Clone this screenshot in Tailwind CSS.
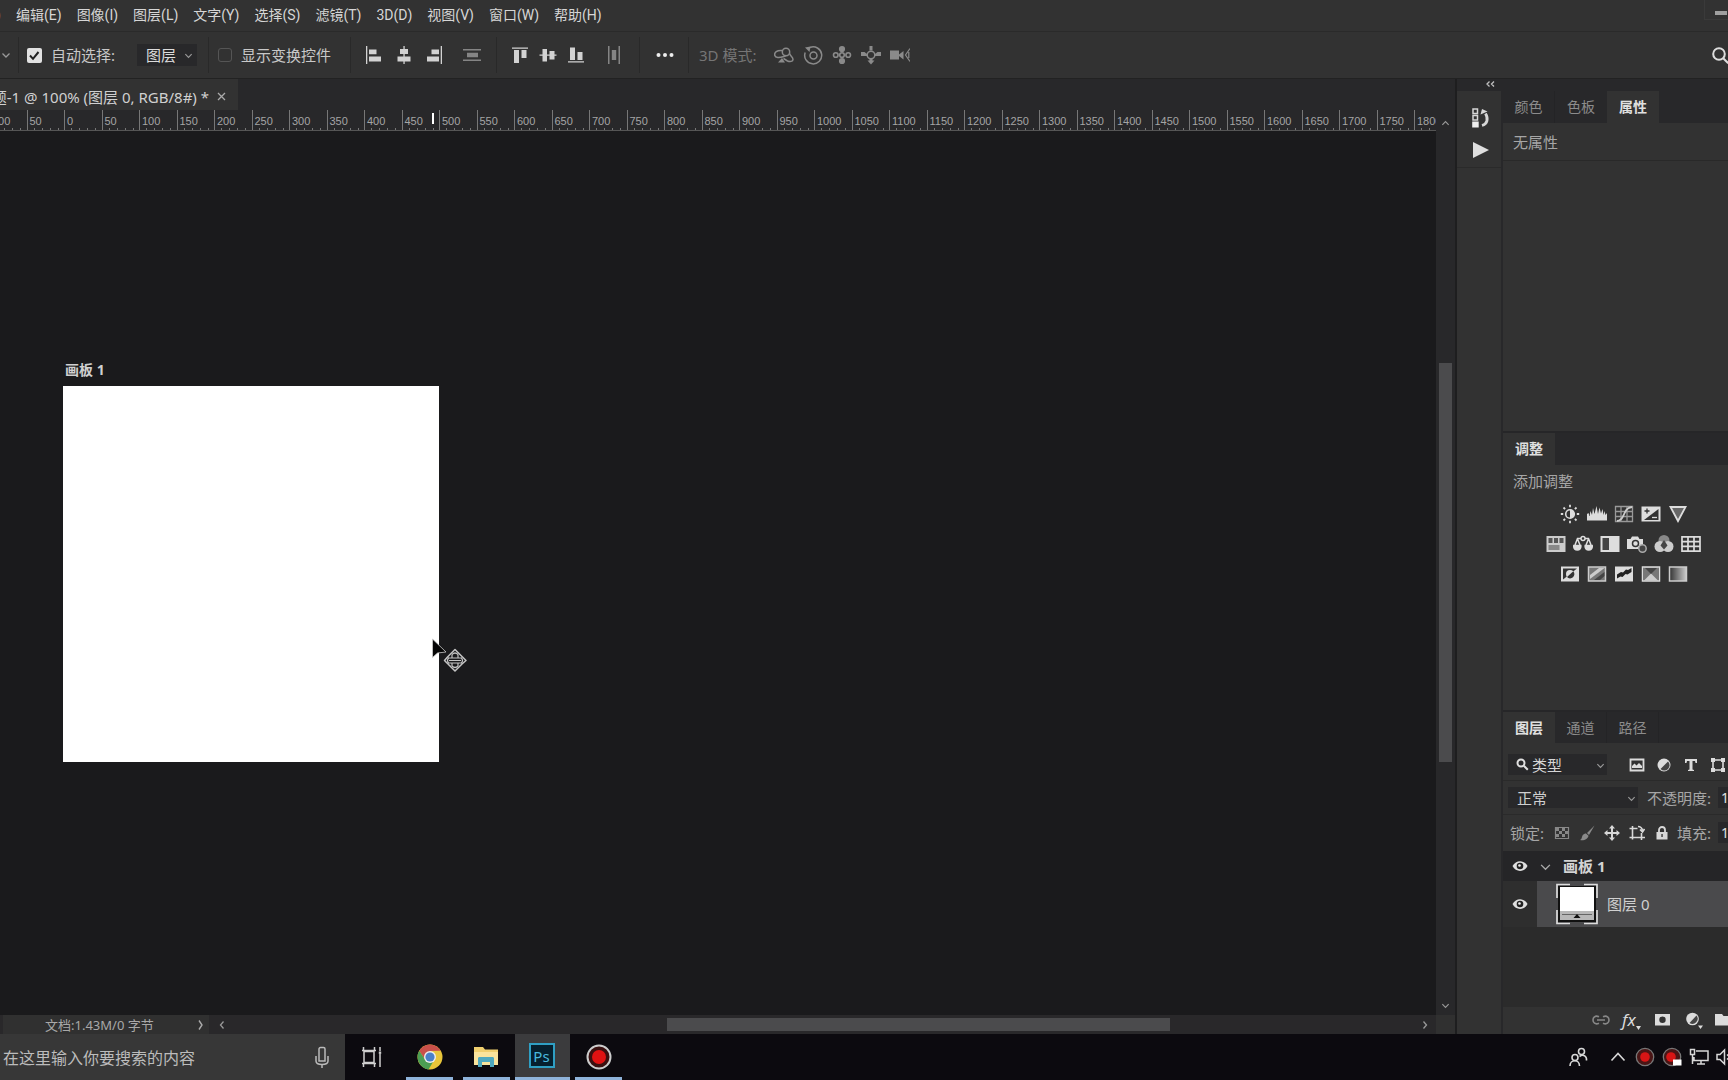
<!DOCTYPE html>
<html lang="zh-CN">
<head>
<meta charset="utf-8">
<title>Photoshop</title>
<script src="https://cdn.jsdelivr.net/npm/@tailwindcss/browser@4"></script>
</head>
<body class="flex h-screen min-w-[1200px] flex-col overflow-hidden bg-[#323232] font-['Noto_Sans','Noto_Sans_CJK_SC',sans-serif] text-[15px] leading-5 text-[#c8c8c8]">

<!-- Menu bar -->
<header class="flex h-8 shrink-0 items-start justify-between border-b border-[#2a2a2a] font-[Roboto,'Noto_Sans_CJK_SC',sans-serif] text-sm">
  <nav class="flex gap-[15px] pt-[5px] text-[#d6d6d6]">
    <button class="-ml-[46px] w-[47px] text-right">文件(F)</button>
    <button>编辑(E)</button>
    <button>图像(I)</button>
    <button>图层(L)</button>
    <button>文字(Y)</button>
    <button>选择(S)</button>
    <button>滤镜(T)</button>
    <button>3D(D)</button>
    <button>视图(V)</button>
    <button>窗口(W)</button>
    <button>帮助(H)</button>
  </nav>
  <button aria-label="最小化" class="flex h-5 w-6 items-end justify-center border-b border-l border-[#3a3a3a] pb-1"><span class="ml-2 block h-1 w-3 bg-[#a0a0a0]"></span></button>
</header>

<!-- Tool options -->
<section class="flex h-[47px] shrink-0 items-center border-b border-[#222]">
  <div class="flex h-9 w-[19px] items-center border-r border-[#292929]">
    <svg class="ml-px" width="10" height="10" viewBox="0 0 10 10" fill="none" stroke="#999" stroke-width="1.3"><path d="M1.5 3.5 5 7l3.500-3.500"/></svg>
  </div>
  <label class="flex w-[118px] items-center gap-[9px] pl-2">
    <span class="relative block h-[15px] w-[15px]">
      <input type="checkbox" checked class="block h-[15px] w-[15px] appearance-none rounded-[2px] bg-[#e2e2e2]">
      <svg class="absolute left-0 top-0" width="15" height="15" viewBox="0 0 15 15" fill="none" stroke="#222" stroke-width="2"><path d="m3 7.500 3 3.300 5.500-6.800"/></svg>
    </span>
    自动选择:
  </label>
  <div class="relative">
    <select aria-label="自动选择" class="block h-[22px] w-[60px] appearance-none bg-[#28282a] pl-[9px] text-[15px] leading-5 text-[#dcdcdc]"><option>图层</option></select>
    <svg class="pointer-events-none absolute right-1 top-[7px]" width="9" height="9" viewBox="0 0 10 10" fill="none" stroke="#999" stroke-width="1.3"><path d="M1.500 3.500 5 7l3.500-3.500"/></svg>
  </div>
  <div class="ml-[11px] h-9 w-px bg-[#292929]"></div>
  <label class="ml-[9px] flex items-center gap-[9px]">
    <input type="checkbox" class="h-[14px] w-[14px] appearance-none rounded-[3px] border border-[#555]">
    显示变换控件
  </label>
  <div class="ml-[19px] h-9 w-px bg-[#292929]"></div>
  <div class="ml-[13px] flex gap-[10px] text-[#d2d2d2]">
    <button aria-label="左对齐"><svg width="20" height="20" viewBox="0 0 20 20" fill="currentColor"><path d="M2 1h1.300v18H2zM5 4.500h7.500v4.800H5zM5 11.500h12v5H5z"/></svg></button>
    <button aria-label="水平居中对齐"><svg width="20" height="20" viewBox="0 0 20 20" fill="currentColor"><path d="M9.400 1h1.300v18H9.400zM6 4h8v5H6zM3.500 11.500h13v5h-13z"/></svg></button>
    <button aria-label="右对齐"><svg width="20" height="20" viewBox="0 0 20 20" fill="currentColor"><path d="M16.700 1H18v18h-1.300zM7.500 4.500H15v4.800H7.500zM3 11.500h12v5H3z"/></svg></button>
  </div>
  <button aria-label="垂直分布" class="ml-[18px] text-[#858585]"><svg width="20" height="20" viewBox="0 0 20 20" fill="currentColor"><path d="M1 4h18v1.500H1zM1 14.500h18V16H1zM5 7.800h11v4.400H5z"/></svg></button>
  <div class="ml-[14px] h-9 w-px bg-[#292929]"></div>
  <div class="ml-[13px] flex gap-2 text-[#d2d2d2]">
    <button aria-label="顶对齐"><svg width="20" height="20" viewBox="0 0 20 20" fill="currentColor"><path d="M2 2.500h16v1.300H2zM4 5h5v13H4zM11.500 5h5v8h-5z"/></svg></button>
    <button aria-label="垂直居中对齐"><svg width="20" height="20" viewBox="0 0 20 20" fill="currentColor"><path d="M1.500 9.400h17v1.300h-17zM4.500 4H9v12.500H4.500zM11.500 6h5v8.500h-5z"/></svg></button>
    <button aria-label="底对齐"><svg width="20" height="20" viewBox="0 0 20 20" fill="currentColor"><path d="M2 16.200h16v1.300H2zM4 2.500h5V15H4zM11.500 7h5v8h-5z"/></svg></button>
  </div>
  <button aria-label="水平分布" class="ml-[18px] text-[#858585]"><svg width="20" height="20" viewBox="0 0 20 20" fill="currentColor"><path d="M4 1h1.500v18H4zM14.500 1H16v18h-1.500zM7.800 5h4.400v10H7.800z"/></svg></button>
  <div class="ml-[15px] h-9 w-px bg-[#292929]"></div>
  <button aria-label="更多" class="ml-[15px]"><svg width="20" height="20" viewBox="0 0 20 20" fill="#eee"><circle cx="3.500" cy="10" r="2"/><circle cx="10" cy="10" r="2"/><circle cx="16.500" cy="10" r="2"/></svg></button>
  <div class="ml-[13px] h-9 w-px bg-[#292929]"></div>
  <span class="ml-[10px] w-[75px] text-[#757575]">3D 模式:</span>
  <div class="flex gap-[9px] text-[#8a8a8a]">
    <button aria-label="环绕"><svg width="20" height="20" viewBox="0 0 20 20" fill="none" stroke="currentColor" stroke-width="1.500"><circle cx="12" cy="7" r="3.700"/><path d="M8 5.500C3 5 0 7.500.8 10.500 1.500 13 5 13 10 11.500l2-1M15.500 8.500c1 3 3.500 3.500 3.500 6 0 2-3 2.500-5.500 1.500l-4-2.500"/><path d="M4 17.500h7l-3-4.500z" fill="currentColor" stroke="none"/></svg></button>
    <button aria-label="滚动"><svg width="20" height="20" viewBox="0 0 20 20" fill="none" stroke="currentColor" stroke-width="1.500"><circle cx="10.500" cy="10.500" r="3.500"/><path d="M7 2.500a8.500 8.500 0 1 1-4.800 5"/><path d="M2 2.500l5.500-1L6.500 7z" fill="currentColor" stroke="none"/></svg></button>
    <button aria-label="平移"><svg width="20" height="20" viewBox="0 0 20 20" fill="none" stroke="currentColor" stroke-width="1.600"><circle cx="10" cy="10" r="2.300"/><circle cx="10" cy="4" r="2.300" fill="currentColor"/><circle cx="10" cy="16" r="2.300" fill="currentColor"/><circle cx="3.800" cy="10" r="2.300"/><circle cx="16.200" cy="10" r="2.300"/></svg></button>
    <button aria-label="滑动"><svg width="20" height="20" viewBox="0 0 20 20" fill="currentColor"><circle cx="10" cy="10" r="3.800" fill="none" stroke="currentColor" stroke-width="1.500"/><path d="M8.500 1h3v4.500h-3zM0 7h3.500L6 9v2H3.500L0 11zM20 7h-3.500L14 9v2h2.500l3.500 0zM8.500 14h3v1.500h2L10 19.500 6.500 15.500h2z"/></svg></button>
    <button aria-label="缩放相机"><svg width="20" height="20" viewBox="0 0 20 20" fill="currentColor"><path d="M0 5.500h9v9H0zM9 9.500 13.500 6v8.500L9 11z"/><path d="M20 3.500 15.500 10l4.500 6.500M18.800 7v6" fill="none" stroke="currentColor" stroke-width="1.200"/></svg></button>
  </div>
  <button aria-label="搜索" class="-mr-px ml-auto"><svg width="18" height="18" viewBox="0 0 18 18" fill="none" stroke="#ddd" stroke-width="2"><circle cx="8" cy="8" r="5.800"/><path d="m12.200 12.200 5 5"/></svg></button>
</section>

<main class="flex min-h-0 flex-1">
  <!-- Document window -->
  <section class="flex min-w-0 flex-1 flex-col border-r-2 border-[#1e1e1f] bg-[#28282a]">
    <div class="flex h-[31px] shrink-0">
      <div class="flex w-[238px] items-center justify-end gap-2 overflow-hidden bg-[#323232] pr-3 pt-1">
        <span class="whitespace-nowrap text-[15px] text-[#d0d0d0]">未标题-1 @ 100% (图层 0, RGB/8#) *</span>
        <button aria-label="关闭"><svg width="9" height="9" viewBox="0 0 9 9" stroke="#aaa" stroke-width="1.300"><path d="m1 1 7 7M8 1 1 8"/></svg></button>
      </div>
    </div>
    <div class="flex min-h-0 flex-1">
      <div class="flex min-w-0 flex-1 flex-col">
        <div class="relative h-[21px] shrink-0 overflow-hidden border-b border-[#555]">
          <div id="ruler" class="-ml-[11px] flex h-full font-['Liberation_Sans',sans-serif] text-[11px] leading-4 text-[#a5a5a5]"></div>
          <span class="absolute left-[432px] top-[3px] h-[11px] w-0.5 bg-white"></span>
        </div>
        <!-- Canvas -->
        <div class="relative flex-1 overflow-hidden bg-[#1a1a1c]">
          <span class="absolute left-[65px] top-[229px] text-[14px] font-bold text-[#d0d0d0]">画板 1</span>
          <div class="absolute left-[63px] top-[255px] h-[376px] w-[376px] bg-white"></div>
          <svg class="absolute left-[430px] top-[505px]" width="40" height="40" viewBox="0 0 40 40"><path d="M2.500 3v18.500l5-4.500 8.500-1z" fill="#050505" stroke="#ccc" stroke-width=".8"/><path d="M25 13.500 28.500 17 32 20.500 36 24.500 32 28 28.500 31.500 25 35 21.500 31.500 18 28 14.500 24.500 18 20.500z" fill="#1a1a1c" stroke="#c4c4c4" stroke-width="1.500" stroke-linejoin="round"/><path d="M22 18.500c2-2 4-2 6 0M22 30c2 2 4 2 6 0M19 21.500c-2 2-2 4 0 6M31 21.500c2 2 2 4 0 6M19 22h12M19 24.500h12M19 27h12M22 18.500v3M28 18.500v3M22 27v3M28 27v3" fill="none" stroke="#c4c4c4" stroke-width="1.200"/></svg>
        </div>
      </div>
      <!-- Vertical scroll bar -->
      <div class="flex w-[19px] flex-col items-center bg-[#28282a] pb-[5px] pt-[9px]">
        <svg width="9" height="9" viewBox="0 0 10 10" fill="none" stroke="#999" stroke-width="1.300"><path d="M1.500 6.500 5 3l3.500 3.500"/></svg>
        <div class="mt-[235px] h-[399px] w-[13px] bg-[#4b4b4d]"></div>
        <svg class="mt-auto" width="9" height="9" viewBox="0 0 10 10" fill="none" stroke="#999" stroke-width="1.300"><path d="M1.500 3.500 5 7l3.500-3.500"/></svg>
      </div>
    </div>
    <!-- Status bar -->
    <div class="flex h-[19px] shrink-0 items-center bg-[#29282a] pl-[3px]">
      <div class="flex h-full w-[206px] items-center justify-between bg-[#303030] pl-[42px] pr-1 text-[13px] text-[#a8a8a8]">
        <span>文档:1.43M/0 字节</span>
        <svg width="8" height="12" viewBox="0 0 8 12" fill="none" stroke="#aaa" stroke-width="1.400"><path d="M2 1.500 5 6l-3 4.500"/></svg>
      </div>
      <svg class="ml-2" width="10" height="10" viewBox="0 0 10 10" fill="none" stroke="#999" stroke-width="1.300"><path d="M6.500 1.500 3.500 5l3 3.500"/></svg>
      <div class="ml-[440px] h-[13px] w-[503px] bg-[#4b4b4d]"></div>
      <svg class="ml-auto mr-[6px]" width="10" height="10" viewBox="0 0 10 10" fill="none" stroke="#999" stroke-width="1.300"><path d="M3.500 1.500 6.500 5l-3 3.500"/></svg>
      <div class="h-full w-[19px] bg-[#303030]"></div>
    </div>
  </section>

  <!-- Right dock -->
  <aside class="flex w-[271px] shrink-0 flex-col bg-[#323232]">
    <div class="h-3 shrink-0 bg-[#28282a] pl-7"><svg width="11" height="10" viewBox="0 0 11 10" fill="none" stroke="#c0c0c0" stroke-width="1.300"><path d="M4.500 2.500 2 5l2.500 2.500M9 2.500 6.500 5 9 7.500"/></svg></div>
    <div class="flex min-h-0 flex-1">
      <div class="flex w-[46px] shrink-0 flex-col items-center border-r-2 border-[#28282a]">
        <div class="flex w-full flex-col items-center gap-3 border-b border-[#2a2a2a] pb-2 pl-1 pt-4">
          <button aria-label="历史记录"><svg width="20" height="22" viewBox="0 0 20 22" fill="none" stroke="#d6d6d6" stroke-width="1.500"><path d="M2 2h4.500v4.500H2zM2 8.500h4.500V13H2z"/><path d="M1.200 14.500h6.500v6H1.200z" fill="#eee" stroke="none"/><path d="M11 18.500c5.500-1.500 6.500-7 3.500-12" stroke-width="2.800"/><path d="M9.500 7.500 11 2l5.500 2.500z" fill="#d6d6d6" stroke="none"/></svg></button>
          <button aria-label="动作"><svg width="18" height="18" viewBox="0 0 18 18" fill="#dedede"><path d="M1 1v16l16-8z"/></svg></button>
        </div>
      </div>
      <div class="flex min-w-0 flex-1 flex-col overflow-hidden">
        <!-- Properties -->
        <section class="flex h-[340px] shrink-0 flex-col">
          <div class="flex h-8 shrink-0 bg-[#28282a] text-[14px] text-[#8c8c8c]">
            <button class="w-[52px] border-r border-[#242426]">颜色</button>
            <button class="w-[52px]">色板</button>
            <button class="w-[52px] bg-[#323232] font-bold text-[#e0e0e0]">属性</button>
          </div>
          <p class="h-[38px] border-b border-[#292929] pl-[10px] pt-[9px] text-[#a6a6a6]">无属性</p>
        </section>
        <!-- Adjustments -->
        <section class="flex h-[279px] shrink-0 flex-col border-t-2 border-[#262628]">
          <div class="flex h-8 shrink-0 bg-[#28282a] text-[14px]">
            <button class="w-[52px] bg-[#323232] font-bold text-[#e0e0e0]">调整</button>
          </div>
          <p class="pl-[10px] pt-[6px] text-[#a6a6a6]">添加调整</p>
          <div class="mt-[13px] flex w-[241px] flex-col gap-[10px]">
            <div class="flex justify-center gap-[7px]">
              <button aria-label="亮度/对比度"><svg width="20" height="20" viewBox="0 0 20 20" fill="#ddd" stroke="#ddd"><circle cx="10" cy="10" r="4.300" fill="none" stroke-width="1.600"/><path d="M10 5.700a4.300 4.300 0 0 1 0 8.600z" stroke="none"/><path d="M10 .8v2.400M10 16.800v2.400M.8 10h2.400M16.800 10h2.400M3.500 3.500l1.600 1.600M14.900 14.900l1.600 1.600M3.500 16.500l1.600-1.600M14.900 5.100l1.600-1.600" stroke-width="1.800"/></svg></button>
              <button aria-label="色阶"><svg width="20" height="20" viewBox="0 0 20 20" fill="#ddd"><path d="M0 16.500V10l1.500-1 1 3L3.500 7l1.500 4 1-7 1.500 6 2-8 1.500 8 1.500-6.500 1.500 6L15.500 5l1 6 1-4 1 4 1.500-2v7.500z"/></svg></button>
              <button aria-label="曲线"><svg width="20" height="20" viewBox="0 0 20 20" fill="none" stroke="#999" stroke-width="1.300"><path d="M1.500 2.500h17v15h-17zM7 2.500v15M13 2.500v15M1.500 7.500h17M1.500 12.500h17"/><path d="M3 17c9-1 5-13 15-14" stroke="#ccc" stroke-width="1.800"/></svg></button>
              <button aria-label="曝光度"><svg width="20" height="20" viewBox="0 0 20 20"><path d="M.5 2.500h19v15H.5z" fill="#ddd"/><path d="M17.500 5v11H3z" fill="#333"/><path d="M3.500 7h5M6 4.500v5" stroke="#333" stroke-width="1.300"/><path d="M11 13.500h5" stroke="#ddd" stroke-width="1.300"/></svg></button>
              <button aria-label="自然饱和度"><svg width="20" height="20" viewBox="0 0 20 20"><path d="M2.500 3h15L10 17z" fill="#666" stroke="#ddd" stroke-width="1.800"/></svg></button>
            </div>
            <div class="flex justify-center gap-[7px]">
              <button aria-label="色相/饱和度"><svg width="20" height="20" viewBox="0 0 20 20"><path d="M.5 2h19v16H.5z" fill="#ccc"/><path d="M2.500 4h4v5h-4zM8 4h4v5H8zM13.500 4h4v5h-4z" fill="#555"/><path d="M2.500 11h11v5h-11z" fill="#888"/></svg></button>
              <button aria-label="色彩平衡"><svg width="20" height="20" viewBox="0 0 20 20" fill="none" stroke="#ddd" stroke-width="1.500"><circle cx="10" cy="4.500" r="2"/><path d="M8 4.500H4.500L2 11M12 4.500h3.500L18 11M4.500 5l2.500 6M15.500 5 13 11"/><path d="M.8 11.500h7c1 6-8 6-7 0zM12.200 11.500h7c1 6-8 6-7 0z" fill="#ddd"/></svg></button>
              <button aria-label="黑白"><svg width="20" height="20" viewBox="0 0 20 20"><path d="M.5 2h19v16H.5z" fill="#ddd"/><path d="M2.500 4H9v12H2.500z" fill="#444"/></svg></button>
              <button aria-label="照片滤镜"><svg width="20" height="20" viewBox="0 0 20 20"><path d="M0 5h3.500L5 2.500h6L12.500 5H16v10H0z" fill="#ddd"/><circle cx="8.500" cy="9.500" r="3" fill="none" stroke="#333" stroke-width="1.500"/><circle cx="15.500" cy="14.500" r="3.700" fill="#444" stroke="#aaa" stroke-width="1.500"/></svg></button>
              <button aria-label="通道混合器"><svg width="20" height="20" viewBox="0 0 20 20"><circle cx="10" cy="6.500" r="5.500" fill="#888"/><circle cx="6" cy="12.500" r="5.500" fill="#ccc"/><circle cx="14" cy="12.500" r="5.500" fill="#ccc"/><path d="m10 6 3.500 5.500-3.500 4-3.500-4z" fill="#444"/></svg></button>
              <button aria-label="颜色查找"><svg width="20" height="20" viewBox="0 0 20 20" fill="none" stroke="#ddd" stroke-width="1.700"><path d="M1 2.800h18v14.400H1zM7 2.800v14.400M13 2.800v14.400M1 7.600h18M1 12.400h18"/></svg></button>
            </div>
            <div class="flex justify-center gap-[7px]">
              <button aria-label="反相"><svg width="20" height="20" viewBox="0 0 20 20"><path d="M1 2.500h18v15H1z" fill="#ddd"/><path d="M3 4.500h14L3 15.500z" fill="#333"/><circle cx="10" cy="10" r="4" fill="#ddd"/><path d="M13.300 7.300 7 13a4.100 4.100 0 0 0 6.300-5.700z" fill="#333"/></svg></button>
              <button aria-label="色调分离"><svg width="20" height="20" viewBox="0 0 20 20"><path d="M1.500 3h17v14h-17z" fill="#777" stroke="#ccc" stroke-width="1.500"/><path d="M3 11 12 4h5.500L3 15z" fill="#ccc"/><path d="m7 16 10.500-8v4L13 16z" fill="#444"/></svg></button>
              <button aria-label="阈值"><svg width="20" height="20" viewBox="0 0 20 20"><path d="M1 2.500h18v15H1z" fill="#ddd"/><path d="m3 10.500 4-2.500 2 .5 3-3 2 .5 3.500-2V8l-4 2.500-2-.5-3 3-2-.5-3.500 2z" fill="#222"/></svg></button>
              <button aria-label="可选颜色"><svg width="20" height="20" viewBox="0 0 20 20"><path d="M1.500 3h17v14h-17z" fill="#777" stroke="#ddd" stroke-width="1.500"/><path d="m2 3.500 8 6.500-8 6.500zM18 3.500 10 10l8 6.500z" fill="#777"/><path d="m3 16.500 7-7 7 7z" fill="#ccc"/><path d="m4 4 6 6 6-6z" fill="#444"/></svg></button>
              <button aria-label="渐变映射"><svg width="20" height="20" viewBox="0 0 20 20"><defs><linearGradient id="gm"><stop offset="0" stop-color="#333"/><stop offset="1" stop-color="#ccc"/></linearGradient></defs><path d="M1.500 3h17v14h-17z" fill="url(#gm)" stroke="#ccc" stroke-width="1.500"/></svg></button>
            </div>
          </div>
        </section>
        <!-- Layers -->
        <section class="flex min-h-0 w-[260px] flex-1 flex-col border-t-2 border-[#262628]">
          <div class="flex h-[31px] shrink-0 bg-[#28282a] text-[14px] text-[#8c8c8c]">
            <button class="w-[52px] bg-[#323232] font-bold text-[#e0e0e0]">图层</button>
            <button class="w-[52px] border-r border-[#242426]">通道</button>
            <button class="w-[52px] border-r border-[#242426]">路径</button>
          </div>
          <div class="flex h-[38px] shrink-0 items-center border-b border-[#2a2a2a] pl-[5px] pt-[6px]">
            <div class="relative">
              <select aria-label="图层过滤" class="block h-[21px] w-[99px] appearance-none bg-[#28282a] pl-6 text-[15px] leading-5 text-[#d6d6d6]"><option>类型</option></select>
              <svg class="pointer-events-none absolute left-2 top-1" width="13" height="13" viewBox="0 0 13 13" fill="none" stroke="#e0e0e0" stroke-width="2"><circle cx="5" cy="5" r="3.500"/><path d="m7.800 7.800 4 4"/></svg>
              <svg class="pointer-events-none absolute right-[2px] top-[7px]" width="9" height="9" viewBox="0 0 10 10" fill="none" stroke="#999" stroke-width="1.300"><path d="M1.500 3.500 5 7l3.500-3.500"/></svg>
            </div>
            <div class="ml-[22px] flex gap-[11px] text-[#dcdcdc]">
              <button aria-label="像素图层"><svg width="16" height="16" viewBox="0 0 16 16"><path d="M1.500 2.500h13v11h-13z" fill="none" stroke="currentColor" stroke-width="1.800"/><path d="M3 11V9l2.500-2.500 2 2L10 6l3 3v2z" fill="currentColor"/></svg></button>
              <button aria-label="调整图层"><svg width="16" height="16" viewBox="0 0 16 16"><circle cx="8" cy="8" r="6.500" fill="currentColor"/><path d="M12 4.500 4.500 12A5.300 5.300 0 0 0 12 4.500z" fill="#444"/></svg></button>
              <button aria-label="文字图层"><svg width="16" height="16" viewBox="0 0 16 16" fill="currentColor"><path d="M2 2h12v4h-1.500L12 4H9.500v8.500L11 13v1H5v-1l1.500-.5V4H4l-.5 2H2z"/></svg></button>
              <button aria-label="形状图层"><svg width="16" height="16" viewBox="0 0 16 16" fill="none" stroke="currentColor"><path d="M3 3h10v10H3z" stroke-width="1.600"/><path d="M1 1h4v4H1zM11 1h4v4h-4zM1 11h4v4H1zM11 11h4v4h-4z" fill="currentColor" stroke="none"/></svg></button>
            </div>
          </div>
          <div class="flex h-[34px] shrink-0 items-center border-b border-[#2a2a2a] pl-[5px]">
            <div class="relative">
              <select aria-label="混合模式" class="block h-[21px] w-[130px] appearance-none bg-[#28282a] pl-[9px] text-[15px] leading-5 text-[#d0d0d0]"><option>正常</option></select>
              <svg class="pointer-events-none absolute right-[2px] top-[7px]" width="9" height="9" viewBox="0 0 10 10" fill="none" stroke="#999" stroke-width="1.300"><path d="M1.500 3.500 5 7l3.500-3.500"/></svg>
            </div>
            <label for="opacity" class="ml-[9px] w-[71px] text-[#a6a6a6]">不透明度:</label>
            <input id="opacity" value="100%" class="h-[21px] w-10 bg-[#28282a] pl-[3px] text-sm text-[#e0e0e0]">
          </div>
          <div class="flex h-9 shrink-0 items-center pb-px pl-[7px]">
            <span class="w-11 text-[#a6a6a6]">锁定:</span>
            <div class="flex gap-[9px] text-[#d8d8d8]">
              <button aria-label="锁定透明像素"><svg width="16" height="16" viewBox="0 0 16 16" fill="#888"><path d="M1.500 2.500h13v11h-13z" fill="none" stroke="#888" stroke-width="1.200"/><path d="M2 3h3v3H2zM8 3h3v3H8zM5 6h3v3H5zM11 6h3v3h-3zM2 9h3v3H2zM8 9h3v3H8z"/></svg></button>
              <button aria-label="锁定图像像素"><svg width="16" height="16" viewBox="0 0 16 16" fill="#8a8a8a"><path d="M15.500.5 10 10l-2-2zM7 8.500l2.500 2.300C9 14 5 16 1 15c2-1 1.500-2.500 2.500-4.500C4.500 9 6 8.500 7 8.500z"/></svg></button>
              <button aria-label="锁定位置"><svg width="16" height="16" viewBox="0 0 16 16" fill="currentColor"><path d="M8 0l3 3.500H9V7h3.500V5L16 8l-3.500 3V9H9v3.500h2L8 16l-3-3.500h2V9H3.500v2L0 8l3.500-3v2H7V3.500H5z"/></svg></button>
              <button aria-label="防止在画板内外自动嵌套"><svg width="16" height="16" viewBox="0 0 16 16" fill="none" stroke="currentColor" stroke-width="1.600"><path d="M3.500 1v13.500M.5 3.500h8M12.500 8v7M.5 12.500H16"/><path d="M9 1.500c2.500 0 4 1.500 4.500 4M15.500 4l-2 3-2.500-2.500"/></svg></button>
              <button aria-label="锁定全部"><svg width="16" height="16" viewBox="0 0 16 16"><path d="M5 7V5a3 3 0 0 1 6 0v2" fill="none" stroke="currentColor" stroke-width="1.800"/><path d="M2.500 7h11v7.500h-11z" fill="currentColor"/><path d="M7.300 9h1.500v3H7.300z" fill="#444"/></svg></button>
            </div>
            <label for="fill" class="ml-[7px] w-[41px] text-[#a6a6a6]">填充:</label>
            <input id="fill" value="100%" class="h-[21px] w-10 bg-[#28282a] pl-[3px] text-sm text-[#e0e0e0]">
          </div>
          <ul class="flex-1 bg-[#2b2b2b]">
            <li class="flex h-[30px] items-center bg-[#252527] pl-[9px]">
              <button aria-label="可见性"><svg width="16" height="12" viewBox="0 0 16 12"><path d="M.5 6C4-.5 12-.5 15.500 6 12 12.500 4 12.500.5 6z" fill="#e0e0e0"/><circle cx="8" cy="6" r="3.300" fill="#222"/><circle cx="7.500" cy="5.500" r="1.300" fill="#eee"/></svg></button>
              <svg class="ml-[12px]" width="11" height="11" viewBox="0 0 10 10" fill="none" stroke="#aaa" stroke-width="1.200"><path d="M1 3.500 5 7.500l4-4"/></svg>
              <span class="ml-3 font-bold text-[#d4d4d4]">画板 1</span>
            </li>
            <li class="flex h-[46px] items-center bg-[#4a4a4c]">
              <div class="flex h-full w-[34px] items-center bg-[#2e2e2e] pl-[9px]">
                <button aria-label="可见性"><svg width="16" height="12" viewBox="0 0 16 12"><path d="M.5 6C4-.5 12-.5 15.500 6 12 12.500 4 12.500.5 6z" fill="#e0e0e0"/><circle cx="8" cy="6" r="3.300" fill="#222"/><circle cx="7.500" cy="5.500" r="1.300" fill="#eee"/></svg></button>
              </div>
              <svg class="ml-[18px]" width="44" height="42" viewBox="0 0 44 42"><path d="M3 3h38v36H3z" fill="#111"/><path d="M5 4h34v24H5z" fill="#fff"/><path d="M5 28h34v9H5z" fill="#b8b8b8"/><path d="M7 31.500h30" stroke="#666"/><path d="m22 31 3.500 4h-7z" fill="#111"/><path d="M2 15V1.500h13M29 1.500h13V15M42 27v13.500H29M15 40.500H2V27" fill="none" stroke="#ddd" stroke-width="1.700"/></svg>
              <span class="ml-2 text-[#d0d0d0]">图层 0</span>
            </li>
          </ul>
          <div class="flex h-[27px] shrink-0 items-center gap-[11px] pb-0.5 pl-[88px] text-[#dcdcdc]">
            <button aria-label="链接图层"><svg width="20" height="20" viewBox="0 0 20 20" fill="none" stroke="#888" stroke-width="1.600"><path d="M8 6.800C4 5 2 7.500 2 10s2 5 6 3.200M12 6.800c4-1.800 6 .7 6 3.200s-2 5-6 3.200M6 10h8"/></svg></button>
            <button class="flex h-5 w-5 items-center text-[17px] italic">fx<svg class="shrink-0 self-end" width="5" height="4" viewBox="0 0 5 4" fill="currentColor"><path d="M0 0h5L2.500 4z"/></svg></button>
            <button aria-label="蒙版"><svg width="20" height="20" viewBox="0 0 20 20"><path d="M2 4h15v11.500H2z" fill="currentColor"/><circle cx="9.500" cy="9.700" r="3.200" fill="#333"/></svg></button>
            <button aria-label="新建调整图层"><svg width="20" height="20" viewBox="0 0 20 20"><circle cx="8.500" cy="9" r="6.300" fill="currentColor"/><path d="m12.500 5.500-7 7.500a5.200 5.200 0 0 0 7-7.500z" fill="#444"/><path d="M14 15.500h5L16.500 19z" fill="currentColor"/></svg></button>
            <button aria-label="新建组"><svg width="20" height="20" viewBox="0 0 20 20" fill="currentColor"><path d="M0 4h7l1.500 2H19v9.500H0z"/></svg></button>
          </div>
        </section>
      </div>
    </div>
  </aside>
</main>

<!-- Windows task bar -->
<footer class="flex h-[46px] shrink-0 bg-[#0c0a0f]">
  <label class="flex w-[345px] items-center justify-between bg-[#373737] pl-[3px] pr-4">
    <input aria-label="搜索" placeholder="在这里输入你要搜索的内容" class="mt-0.5 w-60 bg-transparent text-base placeholder:text-[#bcbcbc] placeholder:opacity-100">
    <svg width="14" height="24" viewBox="0 0 14 24" fill="none" stroke="#bbb" stroke-width="1.500"><path d="M4 4a1.500 1.500 0 0 1 1.500-1.500h3A1.500 1.500 0 0 1 10 4v12H4z"/><path d="M1 11v5c0 2 2 3.500 6 3.500s6-1.500 6-3.500v-5M7 19.500V23"/></svg>
  </label>
  <nav class="flex">
    <button aria-label="任务视图" class="flex w-[58px] items-center justify-center pr-1"><svg width="22" height="22" viewBox="0 0 22 22" fill="none" stroke="#d0d0d0" stroke-width="1.500"><path d="M3 5.500h10v11H3zM2.500 1v3M13.500 1v3M2.500 18v3M13.500 18v3M1 4.500h14M1 17.500h14M19 1v4M19 8v13"/><path d="M17.800 5.500h2.400v2.400h-2.400z" fill="#d0d0d0" stroke="none"/></svg></button>
    <button aria-label="Chrome" class="ml-[3px] mr-[10px] flex w-[47px] items-center justify-center border-b-[3px] border-[#8fb3da] pt-[3px]"><svg width="26" height="26" viewBox="0 0 26 26"><circle cx="13" cy="13" r="12.500" fill="#e8c53a"/><path d="M2.200 6.800A12.500 12.500 0 0 1 23.800 6.800L13 7 8 15.500z" fill="#c9504a"/><path d="M2.200 6.800A12.500 12.500 0 0 0 11.500 25.400l6-10L8 15.500z" fill="#4c9e53"/><circle cx="13" cy="13" r="6" fill="#eee"/><circle cx="13" cy="13" r="4.600" fill="#4a80c8"/></svg></button>
    <button aria-label="资源管理器" class="mr-[5px] flex w-[47px] items-center justify-center border-b-[3px] border-[#8fb3da] pr-0.5 pt-[3px]"><svg width="26" height="24" viewBox="0 0 26 24"><path d="M1 2h9l2 2.500h13V20H1z" fill="#f0cf6e"/><path d="M1 7h24v13H1z" fill="#f9e39c"/><path d="M5 22v-8.500c0-1 .7-1.500 1.500-1.500h13c1 0 1.500.7 1.500 1.500V22h-4v-5H9v5z" fill="#4fa9bf"/></svg></button>
    <button class="mr-[5px] flex w-[55px] items-center justify-center border-b-[3px] border-[#8fb3da] bg-[#3b3b3d] pr-0.5"><span class="flex h-[25px] w-[26px] items-center justify-center border-2 border-[#2f9fc4] bg-[#06202f] text-[15px] leading-5 text-[#49b8de]">Ps</span></button>
    <button aria-label="录屏" class="flex w-[47px] items-center justify-center border-b-[3px] border-[#8fb3da] pt-[3px]"><svg width="26" height="26" viewBox="0 0 26 26"><circle cx="13" cy="13" r="11.500" fill="#3a1010" stroke="#ccc" stroke-width="2"/><circle cx="13" cy="13" r="7" fill="#e01212"/></svg></button>
  </nav>
  <div class="ml-auto flex items-center gap-[7px] text-[#d8d8d8]">
    <button aria-label="人脉"><svg width="20" height="20" viewBox="0 0 20 20" fill="none" stroke="currentColor" stroke-width="1.600"><circle cx="13.500" cy="4.500" r="3"/><circle cx="7" cy="10.500" r="3"/><path d="M2 19c0-7 9.500-7 9.500 0M11.500 9.500c4-3 7.500 0 7 4"/></svg></button>
    <button aria-label="显示隐藏的图标" class="ml-[13px]"><svg width="20" height="20" viewBox="0 0 20 20" fill="none" stroke="currentColor" stroke-width="1.600"><path d="m3.500 13.500 6.500-7 6.500 7"/></svg></button>
    <button aria-label="录制"><svg width="20" height="20" viewBox="0 0 20 20"><circle cx="10" cy="10" r="8.700" fill="#4a1515" stroke="#777" stroke-width="1.300"/><circle cx="10" cy="10" r="4.800" fill="#d81515"/></svg></button>
    <button aria-label="录制状态"><svg width="20" height="20" viewBox="0 0 20 20"><circle cx="10" cy="10" r="8.700" fill="#4a1515" stroke="#777" stroke-width="1.300"/><circle cx="9" cy="10" r="4.800" fill="#d81515"/><path d="M11 12.500h8.500v6H11z" fill="#fff"/></svg></button>
    <button aria-label="网络"><svg width="20" height="20" viewBox="0 0 20 20" fill="none" stroke="currentColor" stroke-width="1.500"><path d="M7 4h12v9.500H5V10M12 13.500V17M8 17h8M1.500 2.500h4v5h-4zM3.500 7.500V17"/></svg></button>
    <button aria-label="音量" class="-mr-2"><svg width="20" height="20" viewBox="0 0 20 20" fill="none" stroke="currentColor" stroke-width="1.500"><path d="M1 7.500h3L8.500 3v14L4 12.500H1zM11 7.500l5 5M16 7.500l-5 5"/></svg></button>
  </div>
</footer>

<script>
  // Ruler: one 75px pair per 100 units, a labelled tick every 50, small ticks every 10.
  const ruler = document.getElementById('ruler');
  for (let v = -100; v <= 2400; v += 100) {
    const pair = document.createElement('div');
    pair.className = 'grid w-[75px] shrink-0 grid-cols-2';
    for (const n of [v, v + 50]) {
      const cell = document.createElement('span');
      cell.className = 'min-w-0 border-l border-[#777] bg-[repeating-linear-gradient(90deg,transparent_0_6px,#777_6px_7px,transparent_7px_8px)] bg-[length:100%_2px] bg-bottom bg-no-repeat pl-0.5 pt-[3px]';
      cell.textContent = Math.abs(n);
      pair.append(cell);
    }
    ruler.append(pair);
  }
</script>
</body>
</html>
